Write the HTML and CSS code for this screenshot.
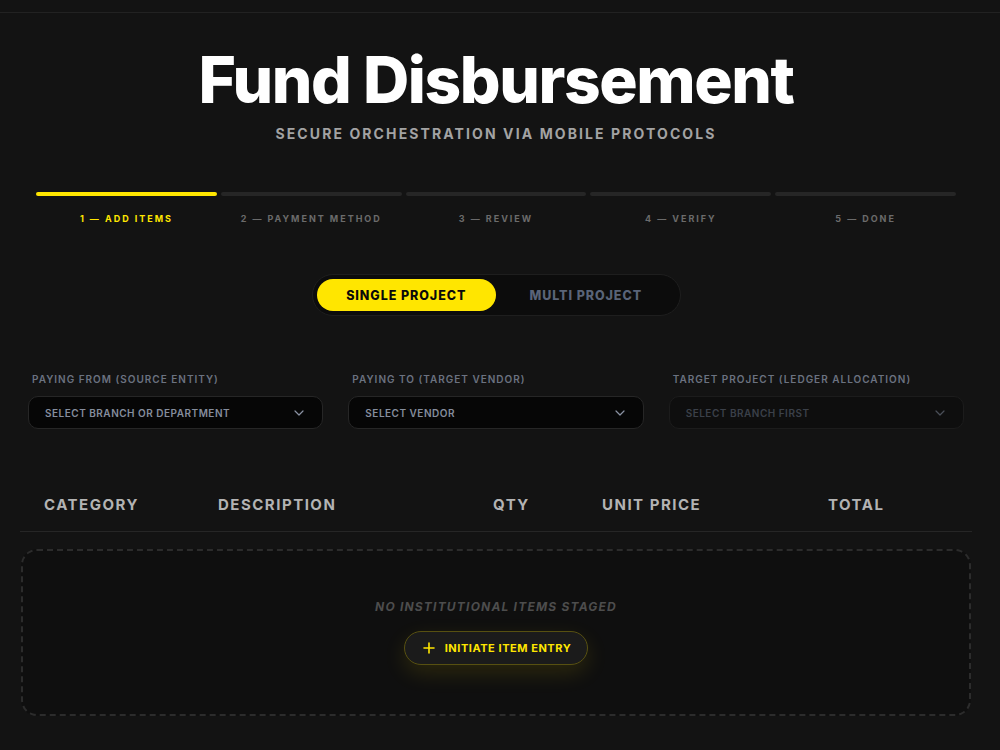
FILE: index.html
```html
<!DOCTYPE html>
<html lang="en">
<head>
<meta charset="utf-8">
<title>Fund Disbursement</title>
<link rel="stylesheet" href="styles.css">
</head>
<body>
<div class="topbar"></div>
<main class="page">
  <header class="hero">
    <h1 class="title">Fund Disbursement</h1>
    <p class="subtitle">SECURE ORCHESTRATION VIA MOBILE PROTOCOLS</p>
  </header>

  <ol class="steps">
    <li class="step active"><span class="bar"></span><span class="step-label">1 — ADD ITEMS</span></li>
    <li class="step"><span class="bar"></span><span class="step-label">2 — PAYMENT METHOD</span></li>
    <li class="step"><span class="bar"></span><span class="step-label">3 — REVIEW</span></li>
    <li class="step"><span class="bar"></span><span class="step-label">4 — VERIFY</span></li>
    <li class="step"><span class="bar"></span><span class="step-label">5 — DONE</span></li>
  </ol>

  <div class="toggle-wrap">
    <div class="toggle">
      <button class="toggle-btn on">SINGLE PROJECT</button>
      <button class="toggle-btn">MULTI PROJECT</button>
    </div>
  </div>

  <section class="fields">
    <div class="field">
      <label class="field-label">PAYING FROM (SOURCE ENTITY)</label>
      <div class="select"><span>SELECT BRANCH OR DEPARTMENT</span><svg class="chev" viewBox="0 0 10 6" width="10" height="6"><path d="M1 1l4 4 4-4" fill="none" stroke="currentColor" stroke-width="1.2" stroke-linecap="round" stroke-linejoin="round"/></svg></div>
    </div>
    <div class="field">
      <label class="field-label">PAYING TO (TARGET VENDOR)</label>
      <div class="select"><span>SELECT VENDOR</span><svg class="chev" viewBox="0 0 10 6" width="10" height="6"><path d="M1 1l4 4 4-4" fill="none" stroke="currentColor" stroke-width="1.2" stroke-linecap="round" stroke-linejoin="round"/></svg></div>
    </div>
    <div class="field">
      <label class="field-label">TARGET PROJECT (LEDGER ALLOCATION)</label>
      <div class="select disabled"><span>SELECT BRANCH FIRST</span><svg class="chev" viewBox="0 0 10 6" width="10" height="6"><path d="M1 1l4 4 4-4" fill="none" stroke="currentColor" stroke-width="1.2" stroke-linecap="round" stroke-linejoin="round"/></svg></div>
    </div>
  </section>

  <section class="table">
    <div class="thead">
      <span>CATEGORY</span>
      <span>DESCRIPTION</span>
      <span>QTY</span>
      <span>UNIT PRICE</span>
      <span>TOTAL</span>
    </div>
    <div class="empty">
      <p class="empty-text">NO INSTITUTIONAL ITEMS STAGED</p>
      <button class="add-btn"><svg viewBox="0 0 12 12" width="12" height="12"><path d="M6 1v10M1 6h10" stroke="currentColor" stroke-width="1.6" stroke-linecap="round"/></svg>INITIATE ITEM ENTRY</button>
    </div>
  </section>
</main>
</body>
</html>
```
FILE: styles.css
```css
* { box-sizing: border-box; }
html, body { margin: 0; padding: 0; }
body {
  background: #131313;
  font-family: Inter, "Noto Sans", sans-serif;
  color: #fff;
  height: 750px;
  overflow: hidden;
}
.topbar {
  height: 13px;
  border-bottom: 1px solid #222222;
}
.page {
  padding: 0 28px 0 20px;
}
.hero { text-align: center; }
.title {
  margin: 35px 0 0;
  font-size: 64px;
  line-height: 64px;
  font-weight: 800;
  letter-spacing: -0.022em;
  color: #ffffff;
}
.subtitle {
  margin: 12px 0 0;
  font-size: 14px;
  line-height: 20px;
  font-weight: 700;
  letter-spacing: 0.15em;
  color: #a3a3a3;
}
.steps {
  list-style: none;
  margin: 48px 0 0;
  padding: 0 16px;
  display: grid;
  grid-template-columns: repeat(5, 1fr);
  column-gap: 4px;
}
.step {
  display: flex;
  flex-direction: column;
  align-items: center;
}
.bar {
  display: block;
  width: 100%;
  height: 4px;
  border-radius: 2px;
  background: #262626;
}
.step-label {
  margin-top: 16px;
  font-size: 9px;
  line-height: 14px;
  font-weight: 700;
  letter-spacing: 0.22em;
  color: #6b6b6b;
}
.step.active .bar { background: #ffe600; }
.step.active .step-label { color: #ffe600; }

.toggle-wrap {
  display: flex;
  justify-content: center;
  margin-top: 48px;
}
.toggle {
  width: 369px;
  height: 42px;
  padding: 4px;
  border: 1px solid #1e1e1e;
  border-radius: 21px;
  background: #0c0c0c;
  display: flex;
}
.toggle-btn {
  flex: 1;
  border: 0;
  border-radius: 16px;
  background: transparent;
  font-family: inherit;
  font-size: 12.5px;
  font-weight: 800;
  letter-spacing: 0.075em;
  color: #5a6478;
  cursor: pointer;
}
.toggle-btn.on {
  background: #ffe600;
  color: #0a0a0a;
}

.fields {
  margin-top: 56px;
  padding: 0 8px;
  display: grid;
  grid-template-columns: repeat(3, 1fr);
  column-gap: 25px;
}
.field { display: flex; flex-direction: column; }
.field-label {
  padding-left: 4px;
  font-size: 10px;
  line-height: 14px;
  font-weight: 600;
  letter-spacing: 0.1em;
  color: #6b7280;
}
.select {
  margin-top: 10px;
  height: 33px;
  border: 1px solid #262626;
  border-radius: 10px;
  background: #060606;
  padding: 0 18px 0 16px;
  display: flex;
  align-items: center;
  justify-content: space-between;
  font-size: 10px;
  font-weight: 600;
  letter-spacing: 0.05em;
  color: #858d9d;
}
.chev { color: #8a92a3; }
.select.disabled {
  background: #0e0e0e;
  border-color: #1c1c1c;
  color: #3b4049;
}
.select.disabled .chev { color: #4a4f58; }

.table { margin-top: 51px; }
.thead {
  display: grid;
  grid-template-columns: 174px 275px 109px 226px 1fr;
  padding: 15px 24px 16px;
  border-bottom: 1px solid #262626;
  font-size: 15px;
  line-height: 20px;
  font-weight: 700;
  letter-spacing: 0.1em;
  color: #b3b3b3;
}
.empty {
  margin: 17px 1px 0;
  height: 167px;
  border: 2px dashed #2c2c2c;
  border-radius: 16px;
  background: #0f0f0f;
  padding-top: 48px;
  display: flex;
  flex-direction: column;
  align-items: center;
}
.empty-text {
  margin: 0;
  font-size: 12px;
  line-height: 16px;
  font-weight: 700;
  font-style: italic;
  letter-spacing: 0.1em;
  color: #4d4d4d;
}
.add-btn {
  margin-top: 16px;
  height: 34px;
  padding: 0 16px 0 18px;
  border: 1px solid #575011;
  border-radius: 17px;
  background: #1b1b1b;
  color: #ffe600;
  font-family: inherit;
  font-size: 11px;
  font-weight: 700;
  letter-spacing: 0.05em;
  display: flex;
  align-items: center;
  gap: 10px;
  box-shadow: 0 8px 22px rgba(255, 225, 0, 0.12);
  cursor: pointer;
}
```
